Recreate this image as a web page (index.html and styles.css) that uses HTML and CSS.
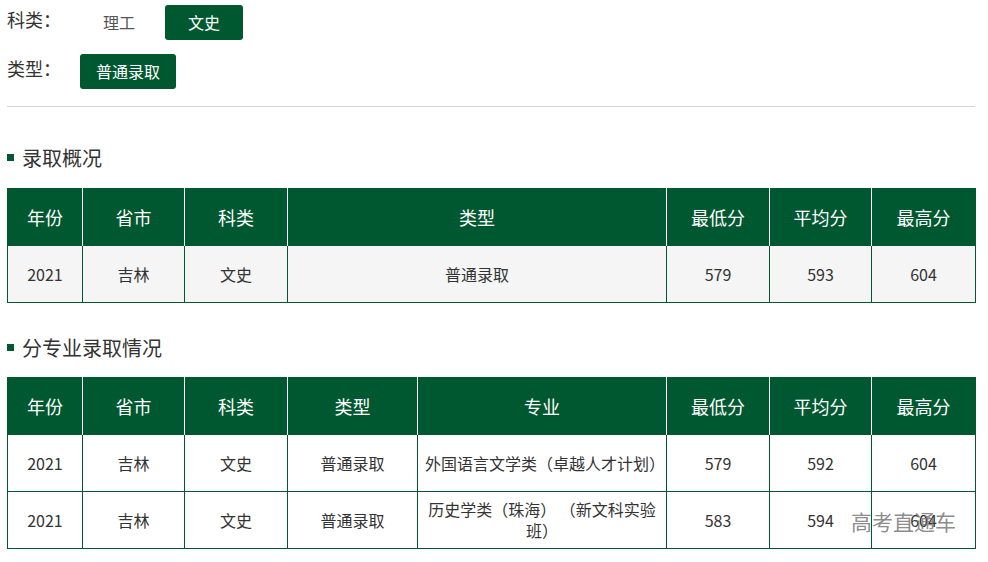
FILE: index.html
```html
<!DOCTYPE html>
<html lang="zh-CN">
<head>
<meta charset="utf-8">
<link rel="stylesheet" href="styles.css">
</head>
<body>
<div class="page">
  <div class="filters">
    <div class="filter-row">
      <span class="filter-label">科类：</span>
      <span class="opt">理工</span>
      <span class="opt opt-active">文史</span>
    </div>
    <div class="filter-row">
      <span class="filter-label">类型：</span>
      <span class="opt opt-active opt-type">普通录取</span>
    </div>
  </div>
  <div class="divider"></div>

  <h2 class="sec-title"><span class="bullet"></span>录取概况</h2>
  <table class="data grey">
    <colgroup>
      <col style="width:75px"><col style="width:102px"><col style="width:103px"><col style="width:379px"><col style="width:103px"><col style="width:102px"><col style="width:104px">
    </colgroup>
    <thead>
      <tr><th>年份</th><th>省市</th><th>科类</th><th>类型</th><th>最低分</th><th>平均分</th><th>最高分</th></tr>
    </thead>
    <tbody>
      <tr><td>2021</td><td>吉林</td><td>文史</td><td>普通录取</td><td>579</td><td>593</td><td>604</td></tr>
    </tbody>
  </table>

  <h2 class="sec-title sec-two"><span class="bullet"></span>分专业录取情况</h2>
  <table class="data">
    <colgroup>
      <col style="width:75px"><col style="width:102px"><col style="width:103px"><col style="width:130px"><col style="width:249px"><col style="width:103px"><col style="width:102px"><col style="width:104px">
    </colgroup>
    <thead>
      <tr><th>年份</th><th>省市</th><th>科类</th><th>类型</th><th>专业</th><th>最低分</th><th>平均分</th><th>最高分</th></tr>
    </thead>
    <tbody>
      <tr><td>2021</td><td>吉林</td><td>文史</td><td>普通录取</td><td class="major">外国语言文学类（卓越人才计划）</td><td>579</td><td>592</td><td>604</td></tr>
      <tr><td>2021</td><td>吉林</td><td>文史</td><td>普通录取</td><td class="major">历史学类（珠海） （新文科实验班）</td><td>583</td><td>594</td><td>604</td></tr>
    </tbody>
  </table>
</div>
<div class="watermark">高考直通车</div>
</body>
</html>
```

FILE: styles.css
```css
html, body {
  margin: 0;
  padding: 0;
  background: #ffffff;
}
body {
  font-family: "Noto Sans CJK SC", "Noto Sans", sans-serif;
  color: #333333;
  position: relative;
  height: 562px;
  overflow: hidden;
}
.page {
  width: 968px;
  margin-left: 7px;
  padding-top: 5px;
}
.filters {
  display: flex;
  flex-direction: column;
  gap: 14px;
}
.filter-row {
  display: flex;
  align-items: center;
  gap: 7px;
  height: 35px;
}
.filter-label {
  font-size: 18px;
  line-height: 35px;
  width: 66px;
  margin-top: -6px;
  color: #333;
}
.opt {
  font-size: 16px;
  line-height: 35px;
  height: 35px;
  width: 78px;
  text-align: center;
  border-radius: 3px;
  color: #555;
}
.opt-active {
  background: #005831;
  color: #ffffff;
}
.opt-type {
  width: 96px;
}
.divider {
  height: 1px;
  background: #d6d6d6;
  margin-top: 17px;
}
.sec-title {
  font-size: 20px;
  font-weight: normal;
  margin: 38px 0 0 0;
  line-height: 26px;
  height: 26px;
  display: flex;
  align-items: center;
  color: #333;
}
.sec-two {
  margin-top: 32px;
}
.bullet {
  width: 7px;
  height: 7px;
  background: #005831;
  margin-right: 8px;
  margin-top: -2px;
}
.data {
  margin-top: 17px;
  width: 968px;
  border-collapse: collapse;
  table-layout: fixed;
  border: 1px solid #005831;
}
.sec-two + .data {
  margin-top: 16px;
}
.data th {
  background: #005831;
  color: #ffffff;
  font-size: 18px;
  font-weight: normal;
  height: 56px;
  padding: 0;
  border-left: 1px solid #ffffff;
  border-right: 1px solid #ffffff;
  border-top: 1px solid #005831;
}
.data th:first-child { border-left-color: #005831; }
.data th:last-child { border-right-color: #005831; }
.data td {
  font-size: 16px;
  text-align: center;
  height: 56px;
  padding: 0;
  border: 1px solid #005831;
  color: #333;
}
.data.grey td {
  background: #f5f5f5;
}
.data td.major {
  padding: 0 7px;
  line-height: 21px;
}
.watermark {
  position: absolute;
  left: 851px;
  top: 506px;
  font-size: 21px;
  color: rgba(110, 110, 110, 0.8);
}
```
